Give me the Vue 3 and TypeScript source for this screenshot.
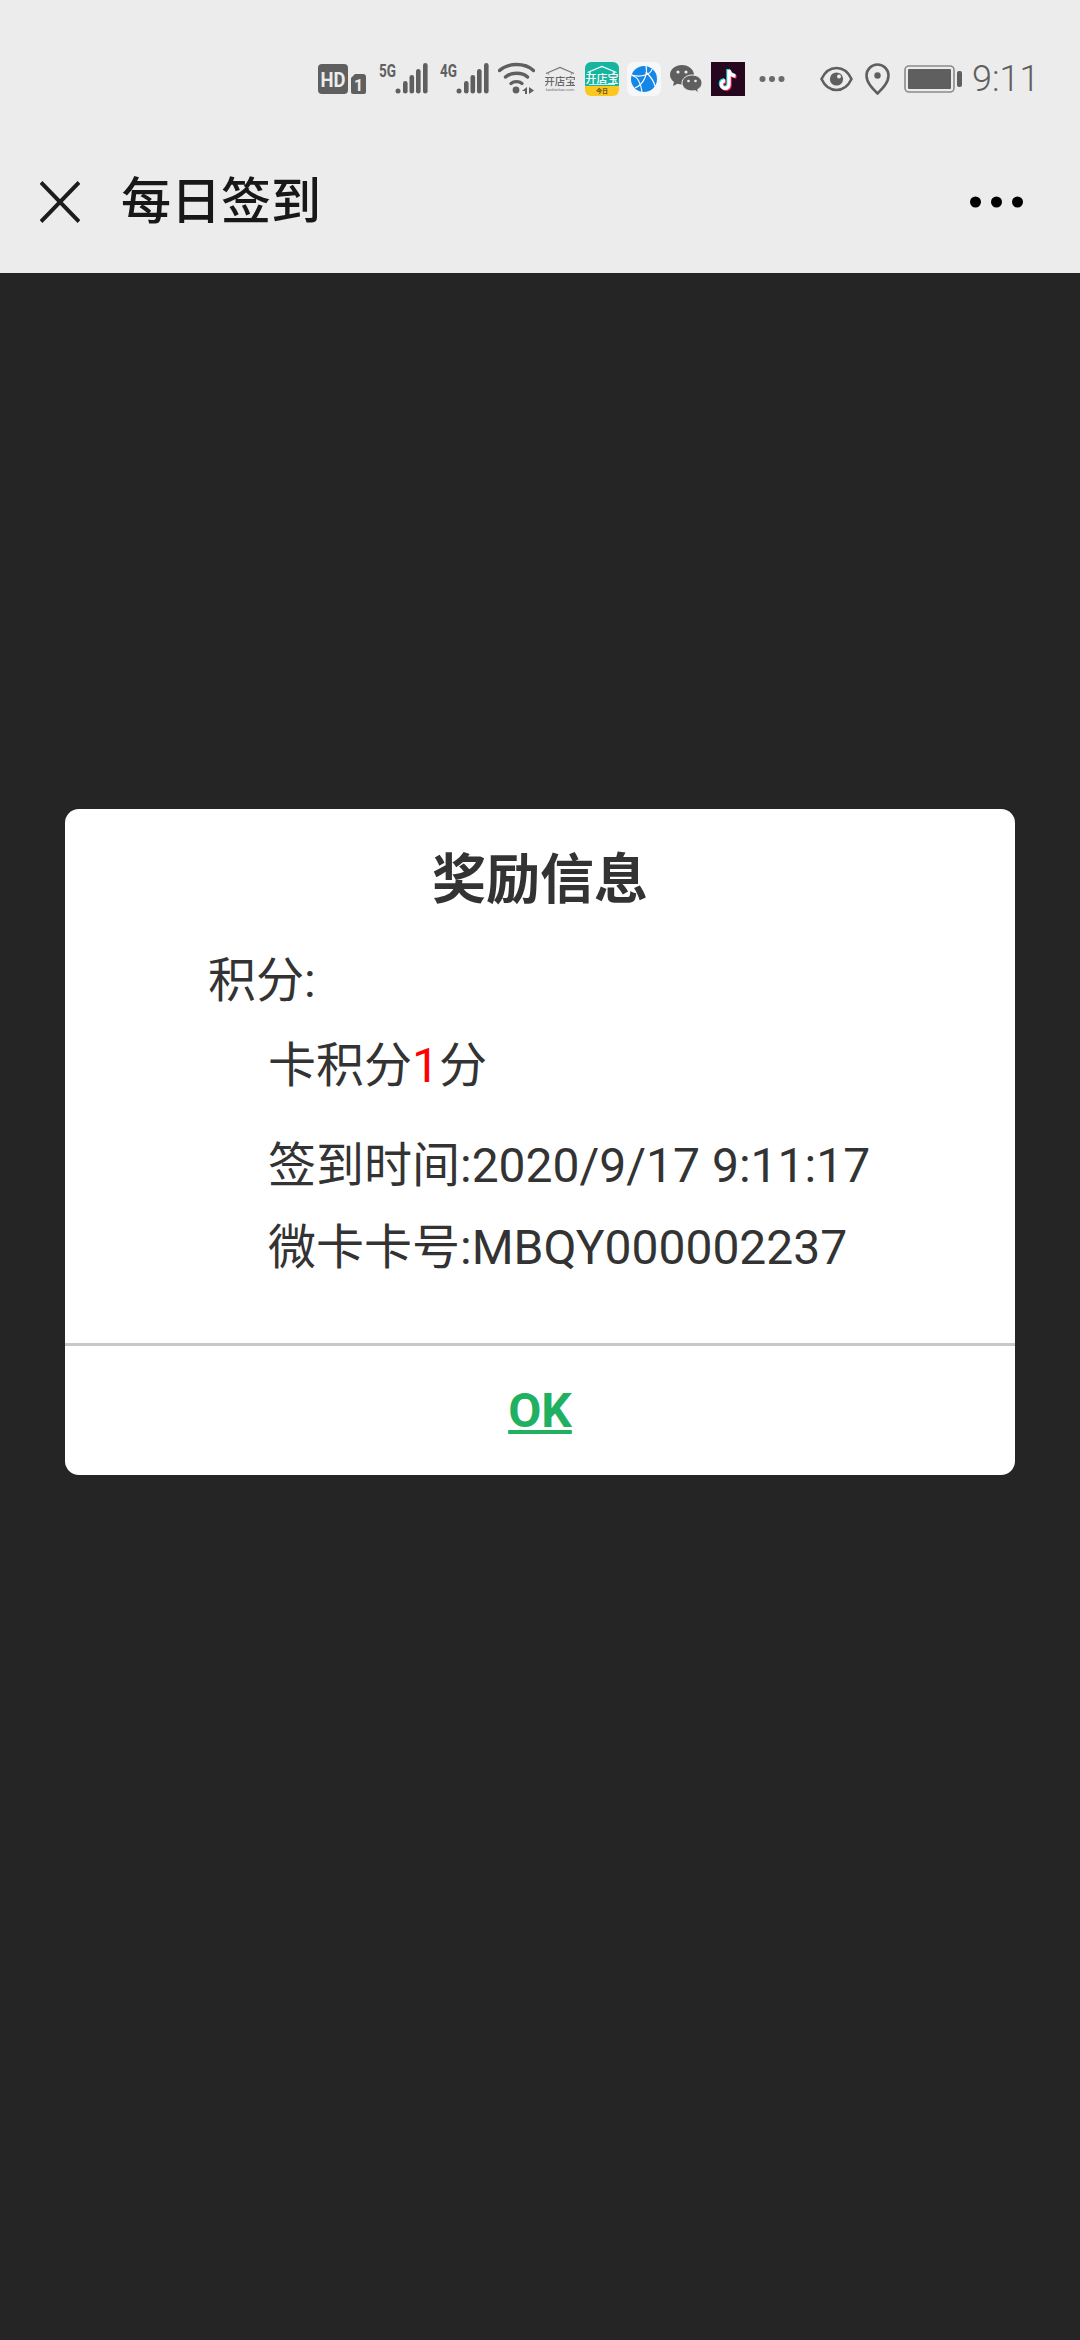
<script setup lang="ts">
const rewardLabel: string = '卡积分'
</script>

<template>
  <div class="page">
    <header class="top">
      <div class="status">
        <svg class="i" width="48" height="34" viewBox="0 0 48 34">
          <rect x="0" y="2" width="30" height="30" rx="4" fill="#5f5f5f" />
          <text x="15" y="24.500" text-anchor="middle" class="hd" textLength="25" lengthAdjust="spacingAndGlyphs">HD</text>
          <path d="M37 12h8a3 3 0 0 1 3 3v15a2 2 0 0 1-2 2h-11a2 2 0 0 1-2-2v-14z" fill="#5f5f5f" />
          <text x="40.500" y="28.500" text-anchor="middle" class="sim">1</text>
        </svg>
        <svg class="i m13" width="49" height="40" viewBox="0 -3 49 40">
          <text x="0" y="15" class="net" textLength="17" lengthAdjust="spacingAndGlyphs">5G</text>
          <g fill="#5f5f5f">
            <circle cx="19" cy="29" r="2.500" /><rect x="24" y="19" width="4.600" height="12.500" rx="2.300" />
            <rect x="30.500" y="13" width="4.600" height="18.500" rx="2.300" /><rect x="37" y="7" width="4.600" height="24.500" rx="2.300" />
            <rect x="44" y="1" width="4.600" height="30.500" rx="2.300" />
          </g>
        </svg>
        <svg class="i m12" width="49" height="40" viewBox="0 -3 49 40">
          <text x="0" y="15" class="net" textLength="17" lengthAdjust="spacingAndGlyphs">4G</text>
          <g fill="#5f5f5f">
            <circle cx="19" cy="29" r="2.500" /><rect x="24" y="19" width="4.600" height="12.500" rx="2.300" />
            <rect x="30.500" y="13" width="4.600" height="18.500" rx="2.300" /><rect x="37" y="7" width="4.600" height="24.500" rx="2.300" />
            <rect x="44" y="1" width="4.600" height="30.500" rx="2.300" />
          </g>
        </svg>
        <svg class="i m9" width="37" height="34" viewBox="0 0 37 34">
          <g fill="none" stroke="#5f5f5f" stroke-width="3.400" stroke-linecap="round">
            <path d="M1.500 8.500C10 0.500 27 0.500 35.500 8.500" />
            <path d="M7.500 15C13 10 24 10 29.500 15" />
            <path d="M13 21.500C16 19 21 19 24 21.500" />
          </g>
          <circle cx="18" cy="28" r="3.400" fill="#5f5f5f" />
          <path d="M29 25v7h-2v-3l-3 0zM31 25v7l5-3.500z" fill="#5f5f5f" />
        </svg>
        <svg class="i m10" width="30" height="28" viewBox="0 0 30 28">
          <path d="M1 8.500L15 2.500l14 6M3.500 8.500v1M26.500 8.500v1" fill="none" stroke="#777" stroke-width="1.300" />
          <text x="15" y="19.500" text-anchor="middle" class="kd">开店宝</text>
          <text x="15" y="26" text-anchor="middle" class="kd-sub">kaidianbao.com</text>
        </svg>
        <svg class="i m10" width="34" height="34" viewBox="0 0 34 34">
          <path d="M6 0h22a6 6 0 0 1 6 6v19H0V6a6 6 0 0 1 6-6z" fill="#16b5a0" />
          <path d="M0 24h34v4a6 6 0 0 1-6 6H6a6 6 0 0 1-6-6z" fill="#fcc81f" />
          <path d="M2.500 10.500L17 4.500l14.500 6M5 10v2M29 10v2" fill="none" stroke="#fff" stroke-width="1.300" />
          <text x="17" y="20.500" text-anchor="middle" class="kd-w">开店宝</text>
          <rect x="4" y="22" width="26" height="1" fill="#c9efe9" />
          <text x="17" y="31" text-anchor="middle" class="kd-y">今日</text>
        </svg>
        <svg class="i m8" width="34" height="34" viewBox="0 0 34 34">
          <rect width="34" height="34" rx="7" fill="#f6f7f9" />
          <circle cx="17" cy="17" r="13" fill="#1487e6" />
          <g fill="none" stroke="#fff" stroke-width="1.200">
            <path d="M4.500 13C11 15 14 21 15 30" /><path d="M4.500 13C15 16 24 12 25 7" />
            <path d="M19 4C21 12 17 22 8 26" /><path d="M19 10C24 15 27 20 28 24" />
          </g>
        </svg>
        <svg class="i m9" width="32" height="28" viewBox="0 0 32 28">
          <path d="M12 0C5.400 0 0 4.300 0 9.800c0 3 1.600 5.500 4 7.300L3 21l4.500-2.300c1.400.4 3 .7 4.500.7 6.600 0 12-4.400 12-9.600S18.600 0 12 0z" fill="#5f5f5f" />
          <path d="M22 10c-5.500 0-10 3.600-10 8s4.500 8 10 8c1 0 2-.1 3-.4l3.500 2.200-.8-3.300c2.600-1.500 4.300-3.800 4.300-6.500 0-4.400-4.500-8-10-8z" fill="#5f5f5f" stroke="#ececec" stroke-width="1" />
          <circle cx="8" cy="7" r="1.600" fill="#ececec" /><circle cx="16" cy="7" r="1.600" fill="#ececec" />
          <circle cx="18.500" cy="16" r="1.300" fill="#ececec" /><circle cx="25.500" cy="16" r="1.300" fill="#ececec" />
        </svg>
        <svg class="i m9" width="34" height="34" viewBox="0 0 34 34">
          <rect width="34" height="34" fill="#26071f" />
          <path d="M18 8v14.500a3.800 3.800 0 1 1-3.800-3.800M18 8c.5 3.500 3 5.600 6.500 6" fill="none" stroke="#25d6dc" stroke-width="3.400" transform="translate(-1 -1)" />
          <path d="M18 8v14.500a3.800 3.800 0 1 1-3.800-3.800M18 8c.5 3.500 3 5.600 6.500 6" fill="none" stroke="#f0254f" stroke-width="3.400" transform="translate(1 1)" />
          <path d="M18 8v14.500a3.800 3.800 0 1 1-3.800-3.800M18 8c.5 3.500 3 5.600 6.500 6" fill="none" stroke="#fff" stroke-width="3.400" />
        </svg>
        <svg class="i m14" width="26" height="8" viewBox="0 0 26 8">
          <circle cx="3.500" cy="4" r="3" fill="#6a6a6a" /><circle cx="13" cy="4" r="3" fill="#6a6a6a" /><circle cx="22.500" cy="4" r="3" fill="#6a6a6a" />
        </svg>
        <svg class="i m35" width="33" height="26" viewBox="0 0 33 26">
          <path d="M1.500 13C5 5.500 10.500 2 16.500 2S28 5.500 31.500 13C28 20.500 22.500 24 16.500 24S5 20.500 1.500 13z" fill="none" stroke="#5f5f5f" stroke-width="2.600" stroke-linejoin="round" />
          <circle cx="16.500" cy="13" r="6.600" fill="#5f5f5f" /><circle cx="19" cy="10.500" r="2" fill="#ececec" />
        </svg>
        <svg class="i m12" width="25" height="32" viewBox="0 0 25 32">
          <path d="M12.500 30.500C7 25 1.500 19.500 1.500 12.500a11 11 0 0 1 22 0c0 7-5.500 12.500-11 18z" fill="none" stroke="#5f5f5f" stroke-width="2.600" stroke-linejoin="round" />
          <circle cx="12.500" cy="12.500" r="3.200" fill="#5f5f5f" />
        </svg>
        <svg class="i m14" width="58" height="28" viewBox="0 0 58 28">
          <rect x="1" y="1" width="49" height="26" rx="4" fill="none" stroke="#8a8a8a" stroke-width="1.600" />
          <rect x="4" y="4" width="43" height="20" rx="1" fill="#5f5f5f" />
          <rect x="53" y="6" width="5" height="16" rx="2" fill="#5f5f5f" />
        </svg>
        <span class="time">9:11</span>
      </div>
      <nav class="bar">
        <svg class="close" width="40" height="42" viewBox="0 0 40 42">
          <path d="M1 1.500l38 39M39 1.500l-38 39" fill="none" stroke="#1c1c1c" stroke-width="4" />
        </svg>
        <span class="title">每日签到</span>
        <svg class="more" width="53" height="12" viewBox="0 0 53 12">
          <circle cx="5.500" cy="6" r="5.500" fill="#000" /><circle cx="26.500" cy="6" r="5.500" fill="#000" /><circle cx="47.500" cy="6" r="5.500" fill="#000" />
        </svg>
      </nav>
    </header>
    <main class="overlay">
      <section class="card">
        <h2 class="heading">奖励信息</h2>
        <div class="body">
          <p class="line label">积分:</p>
          <p class="line reward">{{ rewardLabel }}<span class="red">1</span>分</p>
          <p class="line info first">签到时间:2020/9/17 9:11:17</p>
          <p class="line info">微卡卡号:MBQY000002237</p>
        </div>
        <div class="foot"><a class="ok">OK</a></div>
      </section>
    </main>
  </div>
</template>

<style>
html, body { margin: 0; background: #252525; }
</style>

<style scoped>
.page {
  width: 1080px;
  height: 2340px;
  display: flex;
  flex-direction: column;
  font-family: Roboto, "Noto Sans CJK SC", sans-serif;
  overflow: hidden;
}
.top { background: #ececec; height: 273px; flex: none; }
.status { height: 130px; padding: 28px 0 0 318px; display: flex; align-items: center; box-sizing: border-box; }
.i { flex: none; display: block; }
.m8 { margin-left: 8px; }
.m9 { margin-left: 9px; }
.m10 { margin-left: 10px; }
.m12 { margin-left: 12px; }
.m13 { margin-left: 13px; }
.m14 { margin-left: 14px; }
.m35 { margin-left: 35px; }
.hd { font: 700 21px Roboto, sans-serif; fill: #ececec; }
.sim { font: 700 16px Roboto, sans-serif; fill: #ececec; }
.net { font: 700 19px Roboto, sans-serif; fill: #5f5f5f; }
.kd { font: 500 10.500px "Noto Sans CJK SC", sans-serif; fill: #666; }
.kd-sub { font: 400 4px Roboto, sans-serif; fill: #777; }
.kd-w { font: 500 11px "Noto Sans CJK SC", sans-serif; fill: #fff; }
.kd-y { font: 700 6px "Noto Sans CJK SC", sans-serif; fill: #6b4f10; }
.time { margin-left: 10px; font-size: 36px; font-weight: 300; color: #5f5f5f; line-height: 1; }
.bar { height: 143px; display: flex; align-items: center; padding: 0 57px 0 40px; }
.close { flex: none; }
.title { margin-left: 41px; font-size: 50px; font-weight: 500; color: #181818; line-height: 1; }
.more { margin-left: auto; flex: none; }
.overlay { flex: 1; background: #252525; padding: 536px 65px 0; }
.card { background: #fff; border-radius: 14px; height: 666px; display: flex; flex-direction: column; color: #333; overflow: hidden; }
.heading { margin: 36px 0 0; font-size: 54px; line-height: 72px; font-weight: 700; text-align: center; color: #333; }
.body { flex: 1; padding-left: 143px; }
.line { margin: 0; font-size: 48px; line-height: 82px; white-space: nowrap; }
.label { margin-top: 23px; }
.reward { margin: 3px 0 0 60px; }
.info { margin-left: 60px; }
.first { margin-top: 18px; }
.red { color: #f00; }
.foot { height: 129px; border-top: 3px solid #c8c8c8; display: flex; align-items: center; justify-content: center; }
.ok { font-size: 48px; font-weight: 700; color: #1fb161; text-decoration: underline; }
</style>
